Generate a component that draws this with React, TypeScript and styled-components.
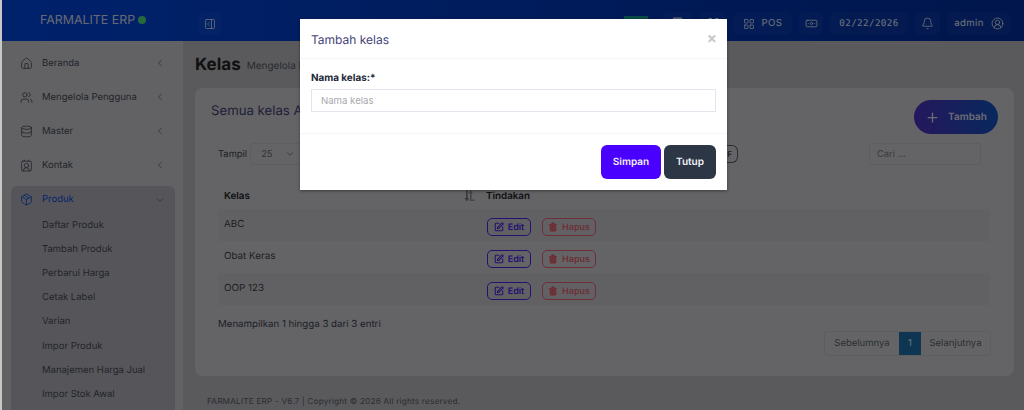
import * as React from 'react';
import styled, { createGlobalStyle } from 'styled-components';
import {
  Banknote,
  Bell,
  Calculator,
  ChevronDown,
  ChevronLeft,
  CircleUserRound,
  ContactRound,
  Database,
  House,
  LayoutGrid,
  Maximize,
  Package,
  PanelRightOpen,
  Plus,
  SquarePen,
  Trash2,
  Users,
} from 'lucide-react';

const GlobalStyle = createGlobalStyle`
  html, body {
    margin: 0;
    padding: 0;
    background: #c8c8c8;
    overflow: hidden;
  }
  * { box-sizing: border-box; }
  body {
    font-family: Inter, "Liberation Sans", sans-serif;
    text-rendering: geometricPrecision;
  }
`;

const Page = styled.div`
  position: relative;
  width: 1024px;
  height: 410px;
  overflow: hidden;
  padding-left: 2px;
  display: flex;
  flex-direction: column;
  background: #c8c8c8;
`;

const Backdrop = styled.div`
  position: absolute;
  inset: 0 0 0 2px;
  background: rgba(0, 0, 0, 0.5);
`;

const TopBar = styled.header`
  height: 41px;
  flex: none;
  padding-top: 6px;
  display: flex;
  align-items: center;
  background: linear-gradient(to right, #0044d8, #002c98);
  color: #fff;
`;

const Brand = styled.div`
  width: 181px;
  margin-top: -8px;
  padding-left: 38px;
  display: flex;
  align-items: center;
  gap: 3px;
  font-size: 12.4px;
  font-weight: 400;
  color: #d0d4e6;
`;

const BrandDot = styled.span`
  width: 8px;
  height: 8px;
  border-radius: 50%;
  background: #4cd37a;
`;

const BarButton = styled.div<{ $w: number; $mono?: boolean }>`
  width: ${(p) => p.$w}px;
  height: 23px;
  flex: none;
  display: flex;
  align-items: center;
  justify-content: center;
  gap: 7px;
  border-radius: 6px;
  background: rgba(255, 255, 255, 0.03);
  font-size: ${(p) => (p.$mono ? 9.2 : 9.6)}px;
  letter-spacing: 0.4px;
  font-family: ${(p) => (p.$mono ? '"DejaVu Sans Mono", monospace' : 'inherit')};
  color: #dfe6f5;
`;

const BarLeft = styled.div`
  margin-left: 15px;
  flex: 1;
`;

const BarRight = styled.div`
  display: flex;
  align-items: center;
  gap: 7px;
  padding-right: 13px;
`;

const GreenTag = styled.div`
  width: 24px;
  height: 24px;
  background: #14998a;
  align-self: flex-start;
  margin: 8px 7px 0 0;
`;

const Body = styled.div`
  flex: 1;
  display: flex;
  min-height: 0;
`;

const Sidebar = styled.aside`
  width: 181px;
  flex: none;
  background: #c4c4ca;
  padding: 5px 8px 0 9px;
`;

const NavItem = styled.div<{ $active?: boolean }>`
  height: 34px;
  display: flex;
  align-items: center;
  padding: 0 9px;
  gap: 9px;
  font-size: 9.5px;
  white-space: nowrap;
  color: ${(p) => (p.$active ? '#0a46d8' : '#454952')};
  svg { flex: none; }
  svg:last-child { margin-left: auto; color: #555a64; }
`;

const NavGroup = styled.div`
  margin-top: 4px;
  background: #acadb5;
  border-radius: 6px;
  height: 300px;
  ${NavItem} {
    height: 26px;
    padding-top: 1px;
    margin-bottom: 1px;
  }
`;

const SubItem = styled.div`
  height: 24.2px;
  padding-left: 31px;
  display: flex;
  align-items: center;
  font-size: 9.5px;
  color: #454952;
`;

const Main = styled.main`
  flex: 1;
  min-width: 0;
  background: #b4b4ba;
  padding: 0 10px 0 12px;
  display: flex;
  flex-direction: column;
`;

const TitleRow = styled.div`
  height: 47px;
  display: flex;
  align-items: center;
  gap: 6px;
`;

const PageTitle = styled.h1`
  margin: 0;
  font-size: 17px;
  font-weight: 700;
  color: #222;
`;

const PageSub = styled.span`
  font-size: 10px;
  color: #50545e;
  padding-top: 3px;
`;

const Card = styled.section`
  height: 288px;
  flex: none;
  background: #c8c8ce;
  border-radius: 8px;
  padding: 12px 16px 0 23px;
`;

const CardHead = styled.div`
  height: 34px;
  display: flex;
  align-items: center;
  justify-content: space-between;
  margin-left: -7px;
`;

const CardTitle = styled.h2`
  margin: 0;
  font-size: 13.2px;
  font-weight: 400;
  color: #40406e;
  padding-bottom: 13px;
`;

const AddButton = styled.div`
  width: 84px;
  height: 34px;
  border-radius: 17px;
  display: flex;
  align-items: center;
  justify-content: center;
  gap: 8px;
  font-size: 10px;
  font-weight: 600;
  color: #d8d8e8;
  background: linear-gradient(to right, #4a30b8, #1050b8);
`;

const Filters = styled.div`
  height: 22px;
  margin-top: 9px;
  display: flex;
  align-items: center;
  font-size: 9.4px;
  color: #3a3e48;
`;

const LengthSelect = styled.div`
  width: 53px;
  height: 22px;
  margin-left: 3px;
  padding: 0 7px 0 10px;
  display: flex;
  align-items: center;
  justify-content: space-between;
  border: 1px solid #bcbcc4;
  border-radius: 3px;
  color: #60646e;
`;

const ExportF = styled.div`
  margin-left: 424px;
  width: 11px;
  height: 18px;
  border: 1px solid #5a5a60;
  border-left: none;
  border-radius: 0 6px 6px 0;
  font-size: 8px;
  font-weight: 600;
  line-height: 16px;
`;

const SearchBox = styled.div`
  margin-left: auto;
  margin-right: 17px;
  width: 112px;
  height: 22px;
  border: 1px solid #bcbcc4;
  border-radius: 2px;
  padding: 0 7px;
  display: flex;
  align-items: center;
  font-size: 9.4px;
  color: #777;
`;

const Table = styled.div`
  margin-top: 18px;
  width: 772px;
  font-size: 9.8px;
  color: #3a3e48;
`;

const Row = styled.div<{ $odd?: boolean; $head?: boolean }>`
  height: ${(p) => (p.$head ? 26 : 32)}px;
  display: grid;
  grid-template-columns: 262px 1fr;
  background: ${(p) => (p.$odd ? '#c3c3c9' : 'transparent')};
  font-weight: ${(p) => (p.$head ? 600 : 400)};
  color: ${(p) => (p.$head ? '#222' : 'inherit')};
`;

const Cell = styled.div<{ $head?: boolean }>`
  padding: ${(p) => (p.$head ? '8px' : '10px')} 6px;
  position: relative;
  display: flex;
  align-items: flex-start;
  gap: 11px;
`;

const SortMark = styled.svg`
  position: absolute;
  right: 5px;
  top: 7px;
  color: #70707a;
`;

const ActionRow = styled.div`
  display: flex;
  gap: 11px;
  padding-left: 1px;
  margin-top: -1px;
`;

const ActionButton = styled.div<{ $tone: string; $w: number }>`
  width: ${(p) => p.$w}px;
  height: 18px;
  border: 1px solid ${(p) => p.$tone};
  border-radius: 5px;
  color: ${(p) => p.$tone};
  display: flex;
  align-items: center;
  justify-content: center;
  gap: 4px;
  font-size: 9px;
  font-weight: 600;
`;

const TableFoot = styled.div`
  margin-top: 14px;
  height: 12px;
  font-size: 9.7px;
  color: #3a3e48;
`;

const PagerRow = styled.div`
  display: flex;
  justify-content: flex-end;
  padding-right: 7px;
`;

const Pager = styled.div`
  width: 167px;
  height: 25px;
  border: 1px solid #bcbcc3;
  border-radius: 3px;
  display: flex;
  align-items: stretch;
  font-size: 9.5px;
  color: #55605e;
`;

const PagerCell = styled.div<{ $active?: boolean; $w: number }>`
  width: ${(p) => p.$w}px;
  display: flex;
  align-items: center;
  justify-content: center;
  background: ${(p) => (p.$active ? '#1c6ca4' : 'transparent')};
  color: ${(p) => (p.$active ? '#d8e2ee' : 'inherit')};
`;

const Footer = styled.footer`
  padding: 20px 0 0 12px;
  font-size: 8.2px;
  letter-spacing: 0.2px;
  color: #555a64;
`;

const Modal = styled.div`
  position: absolute;
  left: 300px;
  top: 19px;
  width: 427px;
  height: 171px;
  background: #fff;
  box-shadow: 0 1px 3px rgba(0, 0, 0, 0.4);
  display: flex;
  flex-direction: column;
`;

const ModalHead = styled.div`
  height: 40px;
  padding: 1px 11px 0;
  border-bottom: 1px solid #f6f6f8;
  display: flex;
  align-items: center;
  justify-content: space-between;
`;

const ModalTitle = styled.h4`
  margin: 0;
  font-size: 12px;
  font-weight: 400;
  color: #45437a;
`;

const CloseMark = styled.span`
  font-size: 15px;
  font-weight: 700;
  color: #c8c8cc;
  margin-top: -4px;
  margin-right: -1px;
`;

const ModalBody = styled.div`
  height: 75px;
  padding: 13px 11px 0;
  border-bottom: 1px solid #f6f6f8;
`;

const FieldLabel = styled.label`
  display: block;
  font-size: 9.9px;
  font-weight: 700;
  color: #222736;
  margin-bottom: 5px;
`;

const TextInput = styled.input`
  display: block;
  width: 100%;
  height: 23px;
  padding: 0 9px;
  border: 1px solid #e3e4ec;
  font-family: inherit;
  font-size: 9.6px;
  outline: none;
  &::placeholder { color: #a8a8ae; }
`;

const ModalFoot = styled.div`
  flex: 1;
  display: flex;
  justify-content: flex-end;
  align-items: center;
  gap: 3px;
  padding: 0 11px;
`;

const ModalButton = styled.div<{ $bg: string; $w: number }>`
  width: ${(p) => p.$w}px;
  height: 34px;
  border-radius: 6px;
  background: ${(p) => p.$bg};
  color: #f2f2f6;
  font-size: 10px;
  font-weight: 600;
  display: flex;
  align-items: center;
  justify-content: center;
`;

const navTop = [
  { label: 'Beranda', icon: House },
  { label: 'Mengelola Pengguna', icon: Users },
  { label: 'Master', icon: Database },
  { label: 'Kontak', icon: ContactRound },
];

const subItems = [
  'Daftar Produk',
  'Tambah Produk',
  'Perbarui Harga',
  'Cetak Label',
  'Varian',
  'Impor Produk',
  'Manajemen Harga Jual',
  'Impor Stok Awal',
];

const rows = ['ABC', 'Obat Keras', 'OOP 123'];

export default function App() {
  return (
    <Page>
      <GlobalStyle />
      <TopBar>
        <Brand>
          FARMALITE ERP
          <BrandDot />
        </Brand>
        <BarLeft>
          <BarButton $w={23}>
            <PanelRightOpen size={12} strokeWidth={1.5} />
          </BarButton>
        </BarLeft>
        <BarRight>
          <GreenTag />
          <BarButton $w={31}>
            <Calculator size={13} />
          </BarButton>
          <BarButton $w={26}>
            <Maximize size={13} />
          </BarButton>
          <BarButton $w={59}>
            <LayoutGrid size={12} strokeWidth={1.5} />
            POS
          </BarButton>
          <BarButton $w={24}>
            <Banknote size={13} strokeWidth={1.5} />
          </BarButton>
          <BarButton $w={78} $mono>
            02/22/2026
          </BarButton>
          <BarButton $w={25}>
            <Bell size={13} strokeWidth={1.5} />
          </BarButton>
          <BarButton $w={64}>
            admin
            <CircleUserRound size={13} strokeWidth={1.5} />
          </BarButton>
        </BarRight>
      </TopBar>
      <Body>
        <Sidebar>
          {navTop.map((item) => (
            <NavItem key={item.label}>
              <item.icon size={13} strokeWidth={1.5} />
              {item.label}
              <ChevronLeft size={12} strokeWidth={1.5} />
            </NavItem>
          ))}
          <NavGroup>
            <NavItem $active>
              <Package size={13} strokeWidth={1.5} />
              Produk
              <ChevronDown size={12} strokeWidth={1.5} />
            </NavItem>
            {subItems.map((label) => (
              <SubItem key={label}>{label}</SubItem>
            ))}
          </NavGroup>
        </Sidebar>
        <Main>
          <TitleRow>
            <PageTitle>Kelas</PageTitle>
            <PageSub>Mengelola kelas Anda</PageSub>
          </TitleRow>
          <Card>
            <CardHead>
              <CardTitle>Semua kelas Anda</CardTitle>
              <AddButton>
                <Plus size={15} />
                Tambah
              </AddButton>
            </CardHead>
            <Filters>
              Tampil
              <LengthSelect>
                25
                <ChevronDown size={10} />
              </LengthSelect>
              <ExportF>F</ExportF>
              <SearchBox>Cari ...</SearchBox>
            </Filters>
            <Table>
              <Row $head>
                <Cell $head>
                  Kelas
                  <SortMark width="11" height="12" viewBox="0 0 11 12" fill="currentColor">
                    <path d="M2 0h1.6v8H5.2L2.8 11.5.4 8H2z" />
                    <path d="M6.6 0L9 3.5H7.6v6H10.4V11H5.6V9.5h.4v-6H4.2z" opacity="0.7" />
                  </SortMark>
                </Cell>
                <Cell $head>Tindakan</Cell>
              </Row>
              {rows.map((name, i) => (
                <Row key={name} $odd={i % 2 === 0}>
                  <Cell>{name}</Cell>
                  <Cell>
                    <ActionRow>
                      <ActionButton $tone="#4a20e0" $w={44}>
                        <SquarePen size={10} strokeWidth={2.5} />
                        Edit
                      </ActionButton>
                      <ActionButton $tone="#d86070" $w={54}>
                        <Trash2 size={10} strokeWidth={2} fill="currentColor" />
                        Hapus
                      </ActionButton>
                    </ActionRow>
                  </Cell>
                </Row>
              ))}
            </Table>
            <TableFoot>Menampilkan 1 hingga 3 dari 3 entri</TableFoot>
            <PagerRow>
              <Pager>
                <PagerCell $w={74}>Sebelumnya</PagerCell>
                <PagerCell $w={22} $active>
                  1
                </PagerCell>
                <PagerCell $w={69}>Selanjutnya</PagerCell>
              </Pager>
            </PagerRow>
          </Card>
          <Footer>FARMALITE ERP - V6.7 | Copyright © 2026 All rights reserved.</Footer>
        </Main>
      </Body>
      <Backdrop />
      <Modal>
        <ModalHead>
          <ModalTitle>Tambah kelas</ModalTitle>
          <CloseMark>×</CloseMark>
        </ModalHead>
        <ModalBody>
          <FieldLabel>Nama kelas:*</FieldLabel>
          <TextInput placeholder="Nama kelas" />
        </ModalBody>
        <ModalFoot>
          <ModalButton $bg="#4a00ff" $w={60}>
            Simpan
          </ModalButton>
          <ModalButton $bg="#2c3645" $w={52}>
            Tutup
          </ModalButton>
        </ModalFoot>
      </Modal>
    </Page>
  );
}
